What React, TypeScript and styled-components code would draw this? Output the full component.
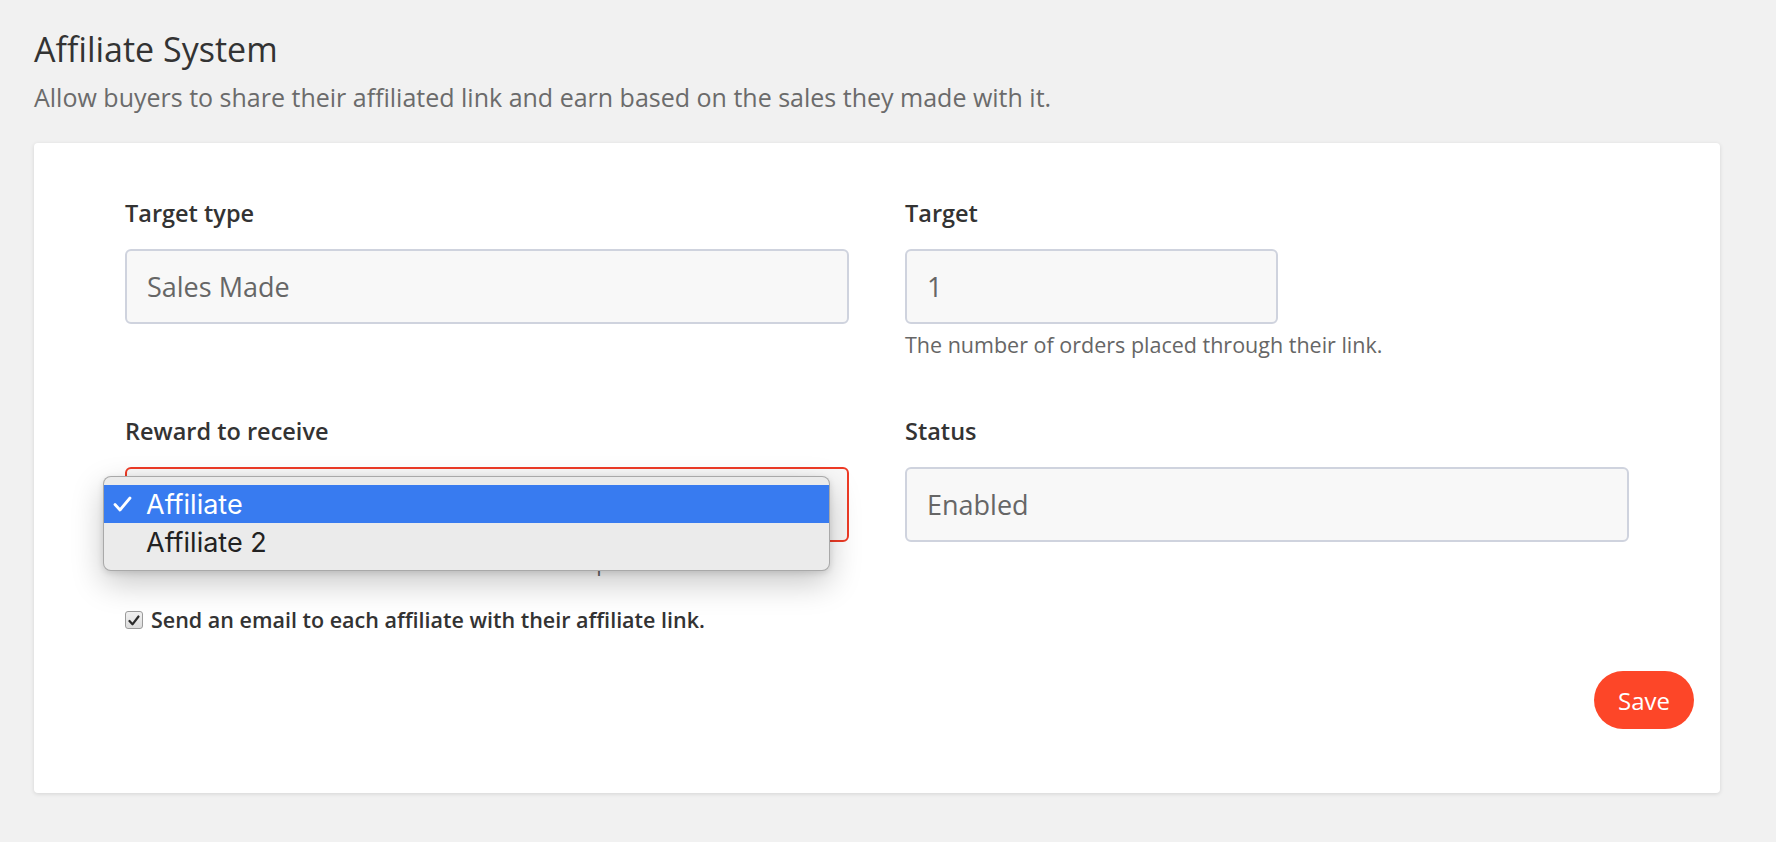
import { createGlobalStyle, styled } from 'styled-components'

const GlobalStyle = createGlobalStyle`
	html, body {
		margin: 0;
		background: #f1f1f1;
	}
	body {
		font-family: 'Open Sans', 'Liberation Sans', sans-serif;
		color: #333;
	}
`

type Option = { label: string; selected?: boolean }

const rewardOptions: Option[] = [
	{ label: 'Affiliate', selected: true },
	{ label: 'Affiliate 2' },
]

export default function App() {
	return (
		<Page>
			<GlobalStyle />
			<Title>Affiliate System</Title>
			<Description>
				Allow buyers to share their affiliated link and earn based on the sales
				they made with it.
			</Description>

			<Card>
				<FormGrid>
					<Field>
						<Label>Target type</Label>
						<Input>Sales Made</Input>
					</Field>

					<Field>
						<Label>Target</Label>
						<Input $narrow>1</Input>
						<Help>The number of orders placed through their link.</Help>
					</Field>

					<Field>
						<Label>Reward to receive</Label>
						<SelectWrap>
							{/* the open native menu hides the selected value */}
							<Input $invalid />
							<Menu>
								{rewardOptions.map((option) => (
									<MenuItem key={option.label} $selected={option.selected}>
										<CheckSlot>
											{option.selected && (
												<svg width="19" height="16" viewBox="0 0 19 16">
													<path
														d="M2 8.5 L7 14 L17 2"
														fill="none"
														stroke="currentColor"
														strokeWidth="2.8"
														strokeLinecap="round"
														strokeLinejoin="round"
													/>
												</svg>
											)}
										</CheckSlot>
										{option.label}
									</MenuItem>
								))}
							</Menu>
						</SelectWrap>
						<Help>The rewards that affiliates receive on each completed order.</Help>
					</Field>

					<Field>
						<Label>Status</Label>
						<Input>Enabled</Input>
					</Field>
				</FormGrid>

				<CheckRow>
					<CheckBox>
						<svg width="12" height="11" viewBox="0 0 12 11">
							<path
								d="M1.5 6 L4.5 9.3 L10.5 1.5"
								fill="none"
								stroke="#2b2b2b"
								strokeWidth="2.2"
								strokeLinecap="round"
								strokeLinejoin="round"
							/>
						</svg>
					</CheckBox>
					Send an email to each affiliate with their affiliate link.
				</CheckRow>

				<Footer>
					<SaveButton>Save</SaveButton>
				</Footer>
			</Card>
		</Page>
	)
}

const Page = styled.div`
	padding: 29px 56px 40px 34px;
`
const Title = styled.h1`
	margin: 0;
	font-size: 34px;
	line-height: 40px;
	font-weight: 400;
	color: #333;
`
const Description = styled.p`
	margin: 10px 0 0;
	font-size: 25px;
	line-height: 36px;
	color: #6b6b6b;
`
const Card = styled.div`
	margin-top: 28px;
	background: #fff;
	border-radius: 4px;
	box-shadow: 0 1px 4px rgba(0, 0, 0, 0.12);
	padding: 54px 26px 64px 91px;
`
const FormGrid = styled.div`
	display: grid;
	grid-template-columns: 724px 724px;
	column-gap: 56px;
	row-gap: 55px;
	align-items: start;
`
const Field = styled.div`
	display: flex;
	flex-direction: column;
	align-items: flex-start;
`
const Label = styled.label`
	font-size: 23.5px;
	line-height: 32px;
	font-weight: 600;
	color: #333;
	margin-bottom: 20px;
`
const Input = styled.div<{ $narrow?: boolean; $invalid?: boolean }>`
	box-sizing: border-box;
	width: ${({ $narrow }) => ($narrow ? '373px' : '100%')};
	height: 75px;
	display: flex;
	align-items: center;
	padding: 0 20px;
	background: #f8f8f8;
	border: 2px solid ${({ $invalid }) => ($invalid ? '#ee3b26' : '#cfd3de')};
	border-radius: 6px;
	font-size: 27px;
	color: #666;
`
const Help = styled.div`
	margin-top: 5px;
	font-size: 21.5px;
	line-height: 31px;
	color: #666;
`
const SelectWrap = styled.div`
	position: relative;
	width: 100%;
`
const Menu = styled.div`
	position: absolute;
	left: -22px;
	top: 9px;
	width: 727px;
	box-sizing: border-box;
	padding: 8px 0 9px;
	background: #ebebeb;
	border: 1px solid rgba(0, 0, 0, 0.28);
	border-radius: 8px;
	box-shadow: 0 12px 32px rgba(0, 0, 0, 0.22), 0 2px 6px rgba(0, 0, 0, 0.12);
	font-family: Inter, 'Liberation Sans', sans-serif;
	z-index: 2;
`
const MenuItem = styled.div<{ $selected?: boolean }>`
	display: flex;
	align-items: center;
	height: 38px;
	font-size: 27px;
	font-weight: 400;
	color: ${({ $selected }) => ($selected ? '#fff' : '#222')};
	background: ${({ $selected }) => ($selected ? '#387bf0' : 'transparent')};
`
const CheckSlot = styled.span`
	width: 42px;
	padding-left: 9px;
	box-sizing: border-box;
	display: flex;
	align-items: center;
`
const CheckRow = styled.label`
	display: flex;
	align-items: center;
	gap: 8px;
	margin-top: 27px;
	font-size: 21.5px;
	line-height: 30px;
	font-weight: 600;
	color: #333;
`
const CheckBox = styled.span`
	width: 18px;
	height: 18px;
	box-sizing: border-box;
	display: flex;
	align-items: center;
	justify-content: center;
	border: 1px solid #9b9b9b;
	border-radius: 3px;
	background: linear-gradient(#f2f2f2, #dcdcdc);
`
const Footer = styled.div`
	display: flex;
	justify-content: flex-end;
	margin-top: 36px;
`
const SaveButton = styled.button`
	width: 100px;
	height: 58px;
	border: none;
	border-radius: 29px;
	background: #fd4628;
	color: #fff;
	font-family: 'Open Sans', 'Liberation Sans', sans-serif;
	font-size: 24px;
	font-weight: 500;
	cursor: pointer;
`
